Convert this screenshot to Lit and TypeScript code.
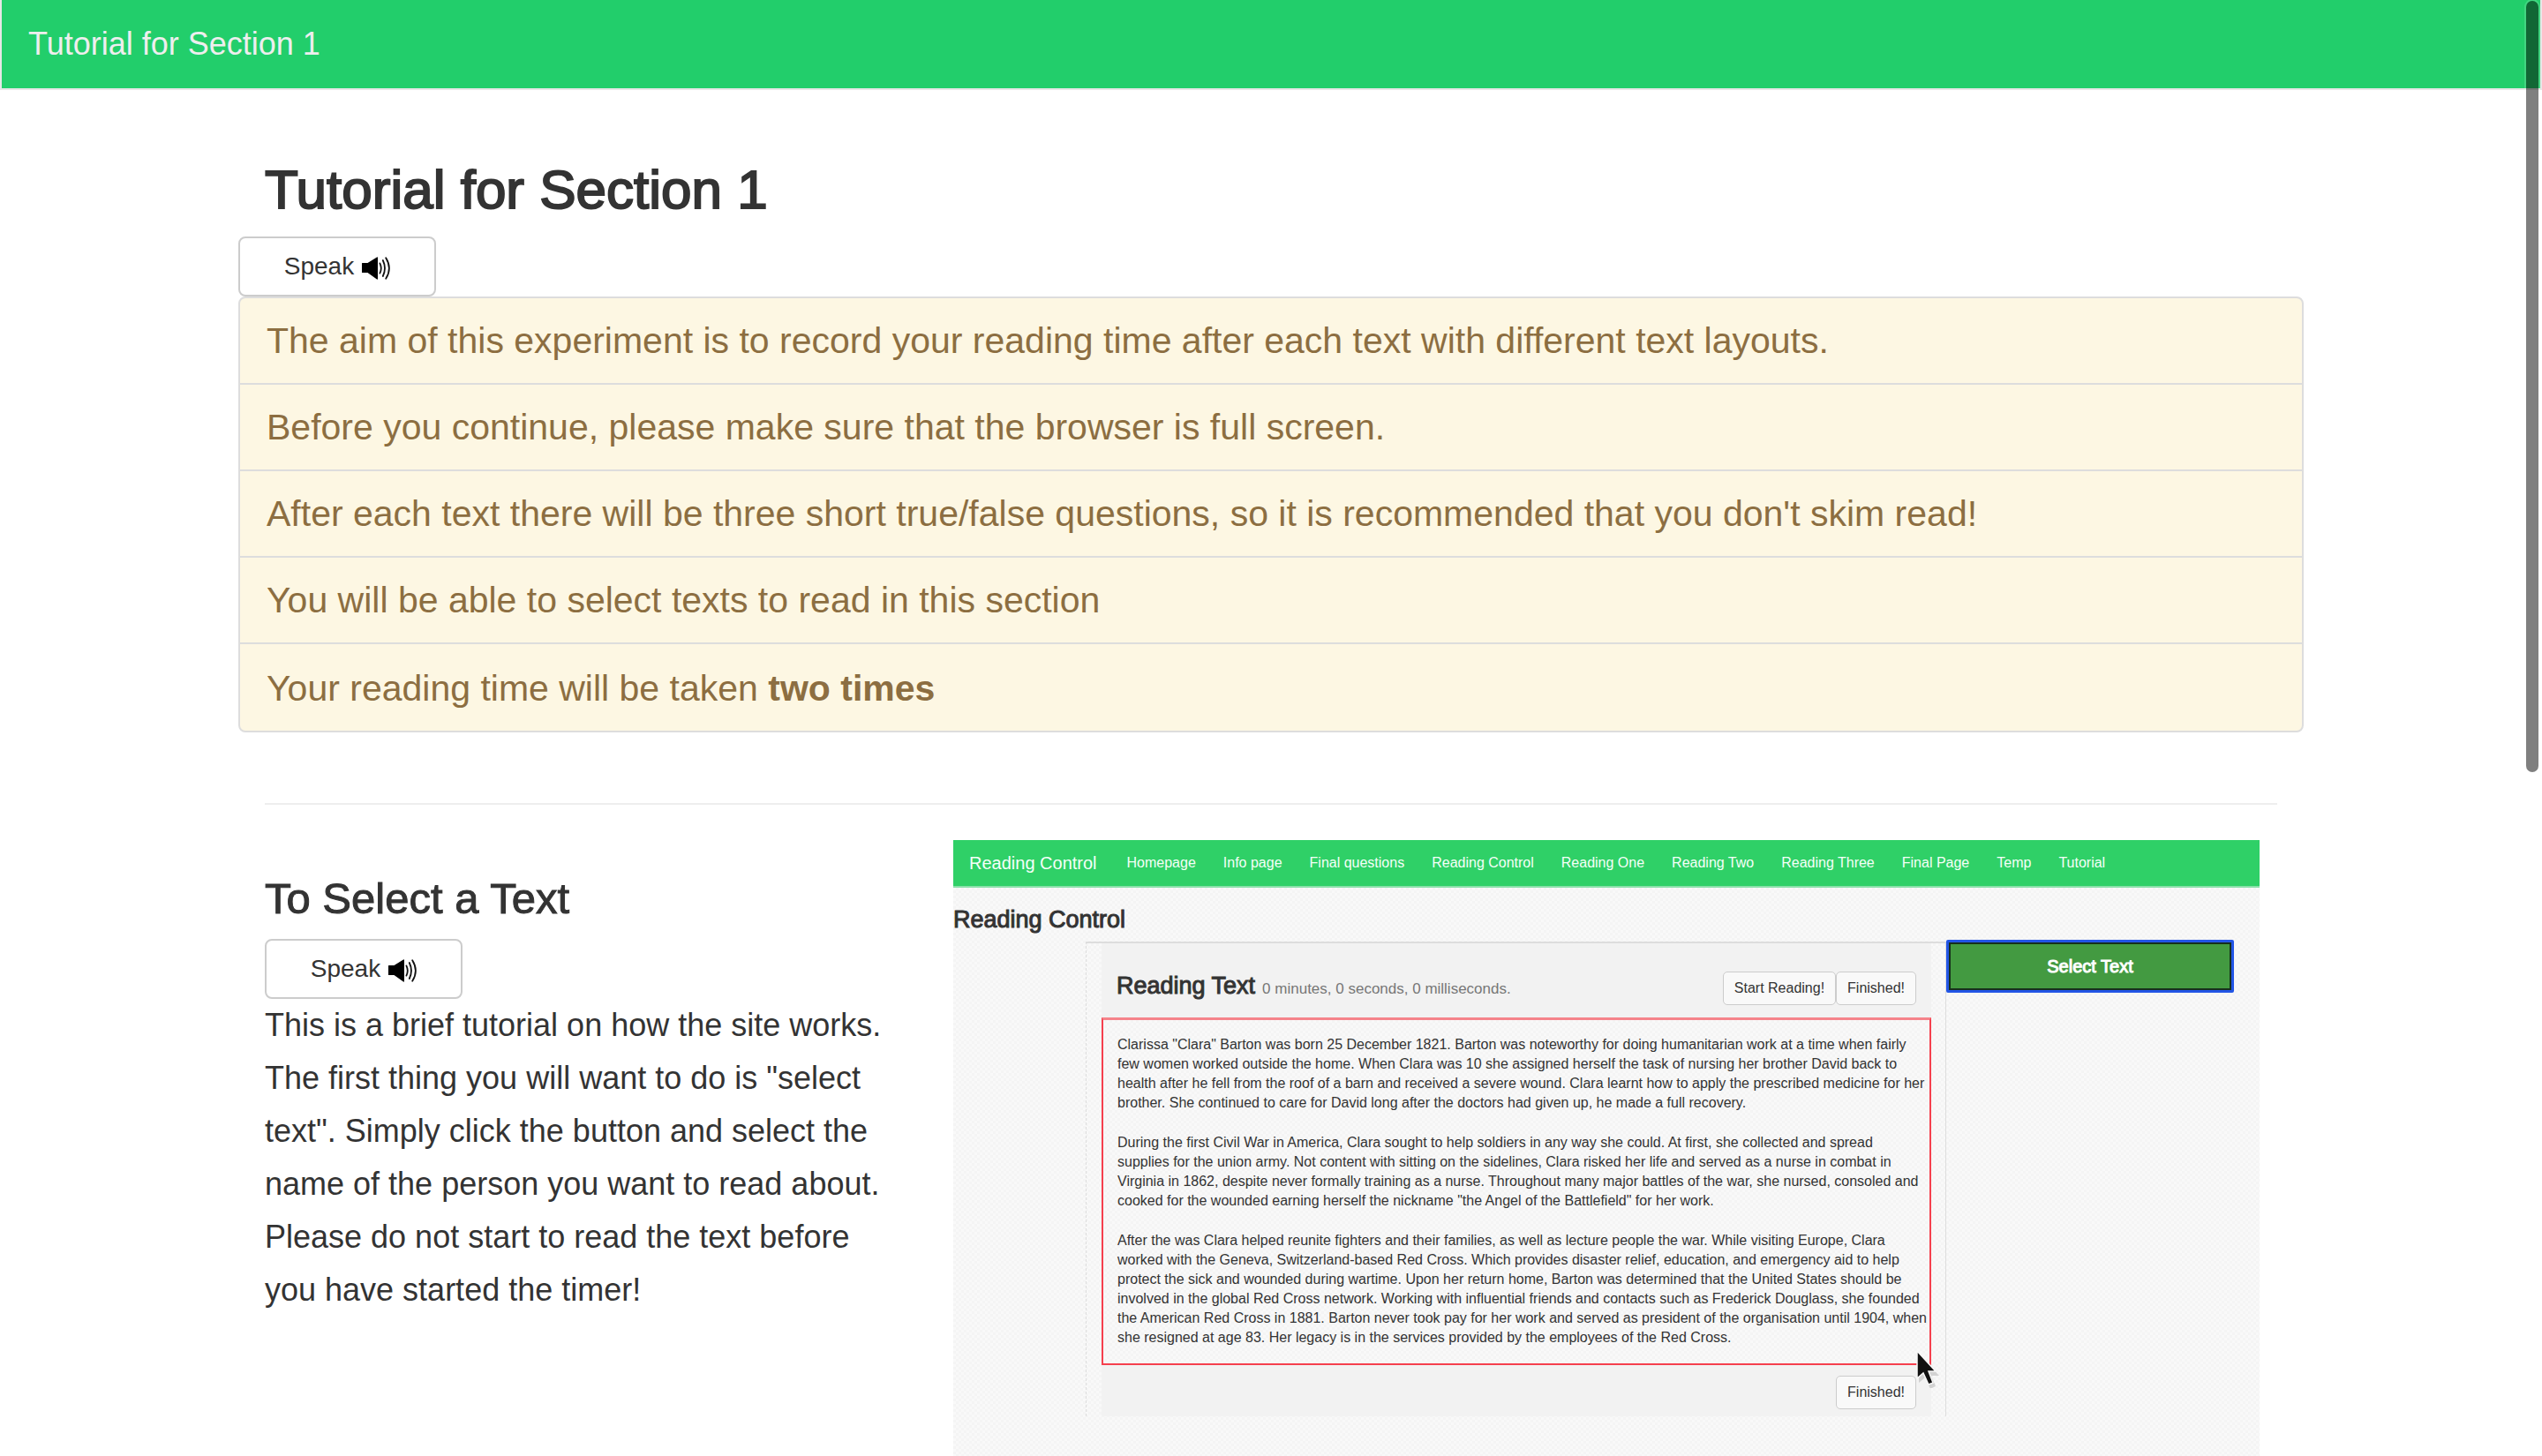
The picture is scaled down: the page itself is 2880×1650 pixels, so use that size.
import { LitElement, html, css, svg } from "lit";
import { customElement } from "lit/decorators.js";

const speaker = svg`<svg class="speaker" viewBox="0 0 32 26" aria-hidden="true">
  <path d="M0 7.5Q0 7 .5 7H6.5L17 .4Q18 0 18 1V25Q18 26 17 25.6L6.5 18H.5Q0 18 0 17.5Z" fill="#000"/>
  <g fill="none" stroke="#111" stroke-width="1.8" stroke-linecap="round">
    <path d="M20.4 7.4Q23.2 13 20.4 18.6"/>
    <path d="M23.8 4Q28.2 13 23.8 22"/>
    <path d="M27.2 1.2Q34.6 13 27.2 24.8"/>
  </g>
</svg>`;

@customElement("speak-button")
export class SpeakButton extends LitElement {
  static styles = css`
    :host { display: block; }
    .speak {
      display: flex; align-items: center; justify-content: center; gap: 9px;
      width: 224px; height: 68px; padding: 0; box-sizing: border-box;
      border: 2px solid #ccc; border-radius: 8px; background: #fff; color: #333;
      font: 28px/40px "Liberation Sans", Arial, sans-serif;
    }
    .speaker { width: 32px; height: 26px; margin-top: 4px; }
  `;
  render() {
    return html`<button class="speak" type="button"><span>Speak</span>${speaker}</button>`;
  }
}

const links = ["Homepage", "Info page", "Final questions", "Reading Control", "Reading One",
  "Reading Two", "Reading Three", "Final Page", "Temp", "Tutorial"];

const story = [
  [
    `Clarissa "Clara" Barton was born 25 December 1821. Barton was noteworthy for doing humanitarian work at a time when fairly`,
    `few women worked outside the home. When Clara was 10 she assigned herself the task of nursing her brother David back to`,
    `health after he fell from the roof of a barn and received a severe wound. Clara learnt how to apply the prescribed medicine for her`,
    `brother. She continued to care for David long after the doctors had given up, he made a full recovery.`,
  ],
  [
    `During the first Civil War in America, Clara sought to help soldiers in any way she could. At first, she collected and spread`,
    `supplies for the union army. Not content with sitting on the sidelines, Clara risked her life and served as a nurse in combat in`,
    `Virginia in 1862, despite never formally training as a nurse. Throughout many major battles of the war, she nursed, consoled and`,
    `cooked for the wounded earning herself the nickname "the Angel of the Battlefield" for her work.`,
  ],
  [
    `After the was Clara helped reunite fighters and their families, as well as lecture people the war. While visiting Europe, Clara`,
    `worked with the Geneva, Switzerland-based Red Cross. Which provides disaster relief, education, and emergency aid to help`,
    `protect the sick and wounded during wartime. Upon her return home, Barton was determined that the United States should be`,
    `involved in the global Red Cross network. Working with influential friends and contacts such as Frederick Douglass, she founded`,
    `the American Red Cross in 1881. Barton never took pay for her work and served as president of the organisation until 1904, when`,
    `she resigned at age 83. Her legacy is in the services provided by the employees of the Red Cross.`,
  ],
];

@customElement("reading-demo")
export class ReadingDemo extends LitElement {
  static styles = css`
    :host {
      display: block; aspect-ratio: 16 / 10; position: relative; color: #333;
      font: 16px/22px "Liberation Sans", Arial, sans-serif;
      background-color: #f8f8f8;
      background-image: conic-gradient(#f4f4f4 25%, #f9f9f9 0 50%, #f4f4f4 0 75%, #f9f9f9 0);
      background-size: 6px 6px;
    }
    .bar {
      display: flex; align-items: center; gap: 31px; height: 54px; padding: 0 18px;
      box-sizing: border-box; background: #2fd067; border-bottom: 2px solid #8be0aa; white-space: nowrap;
    }
    .bar a { color: #f4fff8; text-decoration: none; }
    .bar .brand { font-size: 20px; margin-right: 3px; }
    h3, h4, p { margin: 0; }
    h3, h4 { font-size: 27px; line-height: 30px; font-weight: 500; -webkit-text-stroke: 1px #333; }
    h3 { padding: 21px 0 10px; }
    .area { display: grid; grid-template-columns: 150px 1fr 326px 29px; align-items: start; }
    .outer {
      grid-column: 2; box-sizing: border-box; padding: 0 16px 0 17px;
      border: 1px solid #ddd; border-width: 2px 1px 0; border-left-style: dashed;
    }
    .head { display: flex; align-items: center; height: 84px; padding: 0 17px; background: #f2f2f2; }
    .head h4 { margin: 12px 8px 0 0; }
    .time { flex: 1; font-size: 17px; margin-top: 20px; color: #777; }
    .small {
      height: 38px; padding: 0 12px; box-sizing: border-box; margin: 0; border: 1px solid #ccc;
      border-radius: 5px; background: #f9f9f9; color: #333; white-space: nowrap;
      font: 16px/22px "Liberation Sans", Arial, sans-serif;
    }
    .head .small { margin-top: 18px; }
    .text {
      position: relative; border: 2px solid #f5404e; border-top: 3px solid #f5838a; padding: 17px 0 18px 16px;
      display: grid; gap: 23px; white-space: nowrap;
    }
    .foot { display: flex; justify-content: flex-end; padding: 12px 17px 8px; background: #f2f2f2; }
    .select {
      height: 60px; margin-top: -2px; border: 3px solid #2255e6; border-radius: 2px;
      box-shadow: inset 0 0 0 2px #17301c; background: #439a41; color: #fff;
      font: 20px/28px "Liberation Sans", Arial, sans-serif; -webkit-text-stroke: 1px #fff;
    }
    .cursor { position: absolute; right: -12px; bottom: -28px; width: 28px; height: 44px; }
  `;
  render() {
    return html`
      <nav class="bar">
        <a class="brand" href="#">Reading Control</a>
        ${links.map((l) => html`<a href="#">${l}</a>`)}
      </nav>
      <h3>Reading Control</h3>
      <div class="area">
        <div class="outer">
          <div class="head">
            <h4>Reading Text</h4>
            <span class="time">0 minutes, 0 seconds, 0 milliseconds.</span>
            <button class="small" type="button">Start Reading!</button>
            <button class="small" type="button">Finished!</button>
          </div>
          <div class="text">
            ${story.map((p) => html`<p>${p.map((l, i) => (i ? html`<br />${l}` : l))}</p>`)}
            <svg class="cursor" viewBox="0 0 28 44" aria-hidden="true">
              <path d="M4 4V38L11 32L17 45L23 42L18 30H27Z" fill="#bbb" opacity=".6"/>
              <path d="M2 2V33L9 27L15 40L20 38L15 25H23Z" fill="#111" stroke="#f8f8f8" stroke-width="1.5"/>
            </svg>
          </div>
          <div class="foot"><button class="small" type="button">Finished!</button></div>
        </div>
        <button class="select" type="button">Select Text</button>
      </div>
    `;
  }
}

@customElement("app-root")
export class AppRoot extends LitElement {
  static styles = css`
    :host {
      display: block; position: relative; height: 100vh; overflow: hidden;
      background: #fff; color: #333; font: 36px/60px "Liberation Sans", Arial, sans-serif;
    }
    .navbar {
      display: flex; align-items: center; height: 102px; padding: 0 30px; box-sizing: border-box;
      background: #22ce6b; border: 2px solid #e7e7e7; border-top: 0;
    }
    .navbar a { color: #eee; font-size: 36px; line-height: 40px; text-decoration: none; }
    .container { max-width: 2340px; margin: 0 auto; }
    h1, h2, p, ul { margin: 0; }
    h1, h2 { font-weight: 500; }
    h1 { padding: 80px 30px 20px; font-size: 62px; line-height: 66px; -webkit-text-stroke: 2px #333; }
    .notes { list-style: none; padding: 0; border: 2px solid #ddd; border-radius: 8px; background: #fdf7e3; overflow: hidden; }
    .notes li { padding: 20px 30px; font-size: 41px; line-height: 56px; color: #8c6e41; }
    .notes li + li { border-top: 2px solid #ddd; }
    .notes li:last-child { padding-top: 22px; }
    .rule { border: 0; height: 2px; margin: 80px 30px 40px; background: #eee; }
    .step { display: grid; grid-template-columns: 780px 1fr; padding: 0 50px 0 30px; }
    h2 { padding: 40px 0 20px; font-size: 49px; line-height: 52px; -webkit-text-stroke: 1px #333; }
    .step p { max-width: 720px; }
    .thumb {
      position: absolute; top: 1px; right: 4px; width: 14px; height: 874px; border-radius: 7px;
      background: rgba(0, 0, 0, 0.5); box-shadow: 0 0 0 2px rgba(255, 255, 255, 0.15);
    }
  `;
  render() {
    return html`
      <nav class="navbar"><a href="#">Tutorial for Section 1</a></nav>
      <main class="container">
        <h1>Tutorial for Section 1</h1>
        <speak-button></speak-button>
        <ul class="notes">
          <li>The aim of this experiment is to record your reading time after each text with different text layouts.</li>
          <li>Before you continue, please make sure that the browser is full screen.</li>
          <li>After each text there will be three short true/false questions, so it is recommended that you don't skim read!</li>
          <li>You will be able to select texts to read in this section</li>
          <li>Your reading time will be taken <b>two times</b></li>
        </ul>
        <hr class="rule" />
        <section class="step">
          <div>
            <h2>To Select a Text</h2>
            <speak-button></speak-button>
            <p>This is a brief tutorial on how the site works. The first thing you will want to do is "select text". Simply click the button and select the name of the person you want to read about. Please do not start to read the text before you have started the timer!</p>
          </div>
          <reading-demo></reading-demo>
        </section>
      </main>
      <div class="thumb"></div>
    `;
  }
}
